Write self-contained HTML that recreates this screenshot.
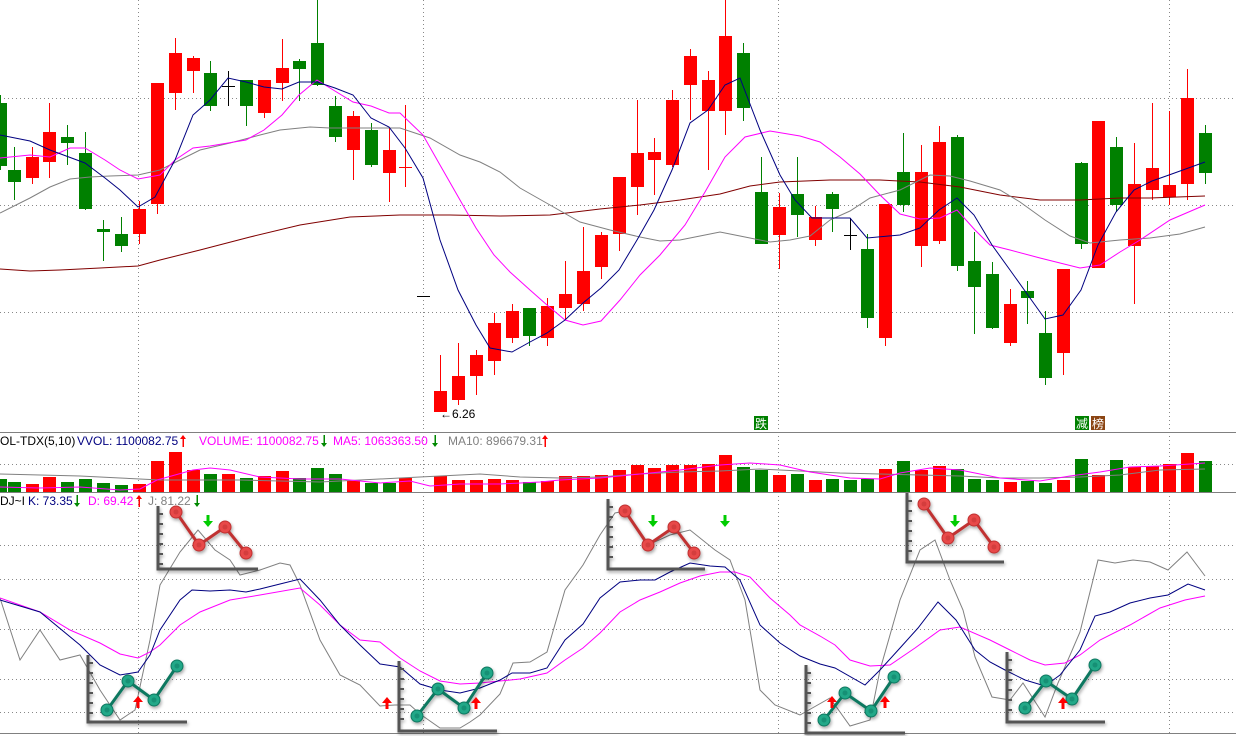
<!DOCTYPE html>
<html><head><meta charset="utf-8"><style>
html,body{margin:0;padding:0;background:#fff;width:1236px;height:736px;overflow:hidden}
svg{display:block}
text{font-family:"Liberation Sans","Noto Sans CJK SC",sans-serif;font-size:12px}
</style></head><body>
<svg id="s" width="1236" height="736" xmlns="http://www.w3.org/2000/svg">
<defs>
<filter id="sh" x="-20%" y="-20%" width="140%" height="140%"><feDropShadow dx="1" dy="2" stdDeviation="1.5" flood-color="#000" flood-opacity="0.35"/></filter>
</defs>
<g id="grid" stroke="#888" stroke-width="1" stroke-dasharray="1,3" fill="none">
<line x1="0" y1="98.5" x2="1236" y2="98.5"/><line x1="0" y1="205.5" x2="1236" y2="205.5"/><line x1="0" y1="312.5" x2="1236" y2="312.5"/>
<line x1="138.5" y1="0" x2="138.5" y2="736"/><line x1="423.5" y1="0" x2="423.5" y2="736"/><line x1="778.5" y1="0" x2="778.5" y2="736"/><line x1="1169.5" y1="0" x2="1169.5" y2="736"/>
<line x1="0" y1="464.5" x2="1236" y2="464.5"/>
<line x1="0" y1="545.5" x2="1236" y2="545.5"/><line x1="0" y1="579.5" x2="1236" y2="579.5"/><line x1="0" y1="629.5" x2="1236" y2="629.5"/><line x1="0" y1="679.5" x2="1236" y2="679.5"/><line x1="0" y1="712.5" x2="1236" y2="712.5"/>
</g>
<line x1="0" y1="432.5" x2="1236" y2="432.5" stroke="#808080"/>
<line x1="0" y1="492.5" x2="1236" y2="492.5" stroke="#808080"/>
<line x1="0" y1="733.5" x2="1236" y2="733.5" stroke="#808080"/>
<g id="candles"></g>
<g id="lines" fill="none" stroke-width="1"></g>
<g id="vol" fill="none"></g>
<text x="440" y="418" fill="#000">←6.26</text>
<rect x="754" y="416" width="14" height="14" fill="#008000"/><text x="755" y="428" fill="#fff">跌</text>
<rect x="1075" y="416" width="14" height="14" fill="#008000"/><text x="1076" y="428" fill="#fff">减</text>
<rect x="1091" y="416" width="14" height="14" fill="#8b4513"/><text x="1092" y="428" fill="#fff">榜</text>
<text x="0" y="445" fill="#000">OL-TDX(5,10)</text>
<text x="77" y="445" fill="#000080">VVOL: 1100082.75</text>
<text x="199" y="445" fill="#f0f">VOLUME: 1100082.75</text>
<text x="333" y="445" fill="#f0f">MA5: 1063363.50</text>
<text x="448" y="445" fill="#808080">MA10: 896679.31</text>
<text x="0" y="505" fill="#000">DJ~I</text>
<text x="28" y="505" fill="#000080">K: 73.35</text>
<text x="88" y="505" fill="#f0f">D: 69.42</text>
<text x="148" y="505" fill="#808080">J: 81.22</text>
<g id="kdj" fill="none" stroke-width="1"></g>
<g id="icons"></g>
<g id="tarr"></g>
</svg>
<script>
var NS="http://www.w3.org/2000/svg";
function el(p,t,a){var e=document.createElementNS(NS,t);for(var k in a)e.setAttribute(k,a[k]);p.appendChild(e);return e;}
var C=[
[0,'g',95,103,166,170],[14,'g',147,170,182,200],[32,'r',147,157,178,184],[49,'r',103,132,162,178],[67,'g',125,137,143,165],[85,'g',132,153,209,210],[103,'g',220,229,232,261],[121,'g',217,234,246,252],[139,'r',201,209,234,244],[157,'r',83,83,204,214],[175,'r',38,53,93,110],[193,'r',56,58,71,93],[210,'g',61,73,106,111],[228,'k',71,86,86,106],[246,'g',80,80,106,126],[264,'r',80,80,113,118],[282,'r',39,68,83,101],[299,'g',59,61,69,101],[317,'g',0,43,85,86],[335,'g',96,106,137,142],[353,'r',111,116,150,180],[371,'g',123,130,165,167],[389,'r',128,150,173,202],[405,'x',105,167,167,187],[423,'k',296,296,296,296],
[440,'r',355,391,412,412],[458,'r',343,376,400,405],[476,'r',350,355,376,395],[494,'r',313,323,361,375],[512,'r',304,311,338,343],[529,'g',308,308,336,346],[547,'r',298,306,338,346],[565,'r',261,294,308,319],[583,'r',227,271,304,311],[601,'r',232,235,267,279],[619,'r',177,177,234,251],[637,'r',100,153,187,215],[654,'r',138,152,160,195],[672,'r',90,100,165,167],[690,'r',49,56,85,120],[708,'r',71,80,111,170],[725,'r',0,36,111,135],[743,'g',43,53,108,121],
[761,'g',157,192,244,244],[779,'r',193,207,235,269],[797,'g',157,194,215,237],[815,'r',206,217,240,246],[832,'g',192,194,209,232],[850,'k',218,235,235,250],[867,'g',234,249,318,328],[885,'r',204,204,338,346],[903,'g',133,172,205,212],[921,'r',145,172,246,267],[939,'r',126,142,241,244],[957,'g',135,137,266,271],[974,'g',232,261,287,334],[992,'g',262,274,328,329],[1010,'r',289,304,343,346],[1027,'g',281,291,298,324],[1045,'g',311,333,378,385],[1063,'r',269,269,353,375],[1081,'g',162,163,244,249],[1098,'r',121,121,268,268],[1116,'g',137,147,205,212],[1134,'r',143,184,246,304],[1152,'r',103,168,190,200],[1169,'r',111,185,197,205],[1187,'r',69,98,184,200],[1205,'g',125,133,173,184]];
var cg=document.getElementById('candles');
C.forEach(function(c){var x=c[0],col=c[1]=='r'?'#f00':c[1]=='g'?'#008000':c[1]=='x'?'#f00':'#000';
 if(c[1]=='k'||c[1]=='x'){ if(c[2]!=c[5])el(cg,'line',{x1:x+.5,y1:c[2],x2:x+.5,y2:c[5],stroke:col});el(cg,'line',{x1:x-6,y1:c[3]+.5,x2:x+7,y2:c[3]+.5,stroke:col});return;}
 el(cg,'line',{x1:x+.5,y1:c[2],x2:x+.5,y2:c[5],stroke:col});
 el(cg,'rect',{x:x-6,y:c[3],width:13,height:Math.max(2,c[4]-c[3]),fill:col});});
function pl(g,pts,col){el(g,'polyline',{points:pts,stroke:col,fill:'none'});}
var lg=document.getElementById('lines');
pl(lg,"0,269 30,271 60,270 100,268 138,266 160,260 200,250 250,237 300,225 350,217 400,215 450,215 500,216 550,215 600,209 640,205 680,200 720,194 750,186 780,182 830,180 880,180 920,182 960,187 1000,195 1040,200 1080,200 1120,198 1150,198 1205,196","#800000");
pl(lg,"0,213 30,198 50,187 70,179 90,177 110,176 138,175 160,170 180,160 200,150 230,143 260,135 280,130 310,127 330,128 360,128 400,128 430,138 460,155 480,162 500,172 520,188 550,205 580,222 610,230 640,237 660,241 680,240 700,236 720,232 740,236 770,242 790,240 810,236 830,220 850,211 870,198 900,190 930,175 950,176 970,181 1000,190 1020,202 1045,220 1070,236 1090,243 1120,240 1150,238 1180,234 1205,227","#808080");
pl(lg,"0,158 30,155 50,157 70,148 85,148 105,160 120,170 138,179 160,175 175,160 193,148 210,146 228,143 246,140 264,130 282,115 299,95 317,80 330,88 353,102 371,106 389,113 400,113 423,135 440,165 460,200 476,228 494,255 510,272 530,290 547,305 565,320 583,325 601,321 620,300 640,275 660,255 685,225 705,192 725,157 745,137 770,131 800,136 820,142 840,157 860,174 880,195 900,214 920,219 940,218 957,210 975,230 990,245 1010,250 1040,258 1080,268 1100,265 1120,252 1140,240 1170,220 1205,205","#ff00ff");
pl(lg,"0,135 30,141 50,150 85,163 105,178 120,190 138,207 155,197 175,160 193,115 210,100 228,78 246,82 264,87 282,89 299,82 317,82 335,88 353,95 371,118 389,127 405,148 423,178 440,240 458,290 476,325 490,348 512,352 530,342 547,333 565,320 583,303 601,288 619,270 637,240 654,210 672,170 690,123 708,110 725,85 740,78 760,130 780,175 795,200 812,218 832,218 850,218 867,238 900,235 920,228 939,210 957,198 974,215 992,245 1010,270 1030,298 1045,319 1063,315 1081,290 1098,245 1116,212 1134,190 1152,181 1169,175 1205,162","#000080");
var V=[[0,'g',479],[14,'g',482],[32,'r',484],[49,'r',477],[67,'g',482],[85,'g',479],[103,'g',483],[121,'g',485],[139,'r',484],[157,'r',461],[175,'r',452],[193,'r',470],[210,'g',474],[228,'r',474],[246,'g',478],[264,'r',476],[282,'r',471],[299,'g',478],[317,'g',468],[335,'g',474],[353,'r',481],[371,'g',483],[389,'g',483],[405,'r',478],[440,'r',476],[458,'r',480],[476,'r',480],[494,'r',479],[512,'r',480],[529,'g',482],[547,'r',481],[565,'r',476],[583,'r',476],[601,'r',475],[619,'r',470],[637,'r',465],[654,'r',468],[672,'r',465],[690,'r',465],[708,'r',464],[725,'r',455],[743,'g',467],[761,'g',470],[779,'r',475],[797,'g',474],[815,'r',480],[832,'g',479],[850,'g',480],[867,'g',479],[885,'r',469],[903,'g',461],[921,'r',470],[939,'r',466],[957,'g',469],[974,'g',479],[992,'g',480],[1010,'r',482],[1027,'g',481],[1045,'g',483],[1063,'r',480],[1081,'g',459],[1098,'r',475],[1116,'g',460],[1134,'r',467],[1152,'r',466],[1169,'r',464],[1187,'r',453],[1205,'g',461]];
var vg=document.getElementById('vol');
V.forEach(function(v){el(vg,'rect',{x:v[0]-6,y:v[2],width:13,height:492-v[2],fill:v[1]=='r'?'#f00':'#008000'});});
pl(vg,"0,474 40,475 80,476 120,478 160,480 200,480 240,480 280,481 320,482 360,480 400,478 440,476 480,474 520,477 560,478 600,477 640,474 680,472 720,471 760,469 800,471 840,473 880,474 920,475 960,476 1000,478 1040,478 1080,477 1120,475 1160,470 1205,469","#808080");
pl(vg,"0,487 40,488 80,487 120,490 140,489 157,480 175,475 193,470 210,468 230,470 260,477 300,479 340,479 380,483 410,481 430,486 460,484 500,484 540,482 560,480 600,478 640,474 680,470 720,465 750,463 780,465 810,472 850,478 880,479 900,473 930,468 960,470 1000,478 1040,481 1070,476 1100,472 1130,467 1160,466 1205,463","#ff00ff");
var kg=document.getElementById('kdj');
pl(kg,"0,598 20,660 40,630 60,660 80,655 100,690 120,720 135,710 150,640 160,585 180,552 198,530 215,550 230,560 240,575 260,570 280,563 290,565 300,585 320,640 340,675 360,685 380,706 395,705 410,705 420,714 440,728 460,728 470,722 480,715 500,694 513,663 530,662 547,652 565,590 583,565 600,535 615,513 625,511 648,545 670,535 690,530 715,550 730,560 745,600 760,690 775,705 800,715 830,698 850,726 870,720 880,670 900,600 920,550 935,540 950,580 963,610 975,657 992,697 1010,700 1023,683 1045,717 1058,683 1080,632 1098,560 1115,563 1133,560 1150,562 1168,570 1187,552 1205,576","#808080");
pl(kg,"0,598 40,612 70,630 100,643 120,654 138,658 150,652 160,645 180,625 200,612 230,600 260,595 300,588 320,605 340,625 360,640 380,642 400,658 420,671 440,681 460,684 480,683 500,681 520,679 547,673 565,660 583,648 600,633 620,612 640,600 660,592 680,583 700,576 720,572 735,572 750,577 770,598 790,615 800,625 820,636 835,645 850,660 870,666 890,665 915,648 940,630 960,627 990,640 1010,650 1030,660 1045,665 1065,663 1080,655 1100,640 1130,625 1160,608 1185,600 1205,596","#ff00ff");
pl(kg,"0,600 40,612 80,645 100,665 120,675 138,672 150,655 160,630 180,600 192,590 210,591 230,590 246,592 260,589 280,584 300,579 320,600 340,625 360,645 380,664 400,667 420,684 440,690 460,693 480,688 500,680 512,673 530,673 547,668 565,640 583,624 600,598 620,582 640,580 655,580 670,572 690,563 710,566 725,567 740,580 760,625 780,643 800,656 820,664 835,668 865,685 880,670 900,648 918,628 938,602 956,620 975,650 990,662 1005,670 1025,680 1045,686 1060,675 1080,650 1095,616 1110,612 1130,603 1150,598 1168,595 1188,584 1205,590","#000080");
var ig=document.getElementById('icons');
function icon(ax,top,bot,right,pts,col,dark){
 var g=el(ig,'g',{filter:'url(#sh)'});
 el(g,'line',{x1:ax,y1:top,x2:ax,y2:bot,stroke:'#555','stroke-width':3});
 el(g,'line',{x1:ax-1.5,y1:bot,x2:right,y2:bot,stroke:'#555','stroke-width':3});
 for(var y=top+8;y<bot-4;y+=10)el(g,'line',{x1:ax,y1:y,x2:ax+5,y2:y,stroke:'#555','stroke-width':2});
 el(g,'polyline',{points:pts.map(function(p){return p.join(',')}).join(' '),stroke:dark,'stroke-width':3,fill:'none'});
 pts.forEach(function(p){el(g,'circle',{cx:p[0],cy:p[1],r:6,fill:col,stroke:dark,'stroke-width':1});el(g,'circle',{cx:p[0],cy:p[1],r:2.5,fill:dark,opacity:0.5});});
}
var R='#e84848',RD='#c03030',G='#20a888',GD='#107860';
icon(158,506,569,258,[[176,512],[199,545],[225,527],[246,553]],R,RD);
icon(608,499,569,705,[[625,511],[648,545],[674,527],[694,553]],R,RD);
icon(907,493,562,1004,[[924,504],[948,538],[974,520],[994,547]],R,RD);
icon(88,655,722,187,[[107,710],[128,681],[154,700],[177,666]],G,GD);
icon(399,661,731,497,[[417,716],[438,689],[464,708],[487,673]],G,GD);
icon(806,665,733,905,[[824,720],[845,693],[871,711],[894,677]],G,GD);
icon(1007,652,722,1105,[[1025,708],[1046,681],[1072,699],[1095,665]],G,GD);
function arr(p,x,y,up,col){col=col||(up?'#f00':'#0c0');
 if(up){el(p,'polygon',{points:(x-5)+','+(y)+' '+(x)+','+(y-6)+' '+(x+5)+','+y,fill:col});el(p,'rect',{x:x-1.5,y:y,width:3,height:6,fill:col});}
 else{el(p,'rect',{x:x-1.5,y:y-6,width:3,height:6,fill:col});el(p,'polygon',{points:(x-5)+','+y+' '+x+','+(y+6)+' '+(x+5)+','+y,fill:col});}}
[[138,702,1],[387,703,1],[476,703,1],[832,702,1],[885,702,1],[1063,703,1],[208,521,0],[653,521,0],[725,521,0],[955,521,0]].forEach(function(a){arr(ig,a[0],a[1],a[2]);});
// small text arrows
var tg=document.getElementById('tarr');
function tarr(x,up,yTop,col){
 if(up){el(tg,'polygon',{points:(x-3)+','+(yTop+4)+' '+x+','+yTop+' '+(x+3)+','+(yTop+4),fill:col});el(tg,'rect',{x:x-0.5,y:yTop+3,width:1.5,height:9,fill:col});}
 else{el(tg,'rect',{x:x-0.5,y:yTop,width:1.5,height:9,fill:col});el(tg,'polygon',{points:(x-3)+','+(yTop+8)+' '+x+','+(yTop+12)+' '+(x+3)+','+(yTop+8),fill:col});}}
tarr(183,1,435,'#f00');tarr(324,0,435,'#080');tarr(435,0,435,'#080');tarr(545,1,435,'#f00');
tarr(77,0,495,'#080');tarr(139,1,495,'#f00');tarr(197,0,495,'#080');
</script>
</body></html>
